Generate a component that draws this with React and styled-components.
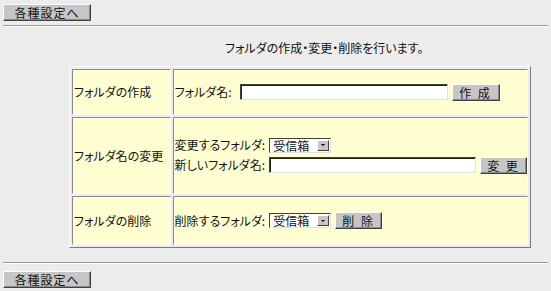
import React from "react";
import styled, { createGlobalStyle } from "styled-components";

const Global = createGlobalStyle`
  html, body { margin: 0; padding: 0; background: #ececec; }
  body {
    font-family: "Noto Sans CJK JP", "Noto Sans", sans-serif;
    font-size: 12px;
    color: #111;
  }
`;

const Page = styled.div`
  width: 551px;
  min-height: 291px;
  box-sizing: border-box;
  padding: 4px 3px 0 3px;
  background: #ececec;
  font-feature-settings: "palt";
`;

const NavButton = styled.button`
  display: block;
  width: 88px;
  height: 17px;
  padding: 0;
  margin: ${p => p.$top || 0}px 0 0 0;
  background: #c6c6c6;
  border: 1px solid;
  border-color: #ffffff #404040 #404040 #ffffff;
  box-shadow: inset -1px -1px 0 #8a8a8a;
  font: 12px/15px "Noto Sans CJK JP", sans-serif;
  font-feature-settings: "palt";
  color: #111;
  letter-spacing: 1px;
`;

const Rule = styled.div`
  margin-top: ${p => p.$top}px;
  height: 0;
  border-top: 1px solid #9a9a9a;
  border-bottom: 1px solid #ffffff;
`;

const Caption = styled.div`
  margin: 14px 0 0 222px;
  line-height: 14px;
  font-size: 12px;
`;

const FormTable = styled.table`
  margin: 11px 0 0 66px;
  width: 462px;
  border-collapse: separate;
  border-spacing: 2px;
  border: 1px solid;
  border-color: #ffffff #7a7a7a #7a7a7a #ffffff;
`;

const Cell = styled.td`
  background: #ffffd2;
  border: 1px solid;
  border-color: #8a8a8a #ffffff #ffffff #8a8a8a;
  padding: 0 0 0 1px;
  vertical-align: middle;
  height: ${p => p.$h}px;
  width: ${p => (p.$w ? p.$w + "px" : "auto")};
  font-size: 12px;
  line-height: 14px;
  white-space: nowrap;
`;

const Line = styled.div`
  display: flex;
  align-items: center;
  gap: ${p => p.$gap || 2}px;
  margin-top: ${p => p.$top || 0}px;
`;

const Label = styled.span`
  margin-right: ${p => p.$gap || 0}px;
`;

const TextBox = styled.div`
  width: ${p => p.$w}px;
  height: 16px;
  box-sizing: border-box;
  background: #fff;
  border: 1px solid;
  border-color: #404040 #e0e0e0 #e0e0e0 #404040;
  box-shadow: inset 1px 1px 0 #202020;
`;

const Select = styled.div`
  width: 62px;
  height: 15px;
  box-sizing: border-box;
  background: #fff;
  border: 1px solid;
  border-color: #404040 #e0e0e0 #e0e0e0 #404040;
  display: flex;
  align-items: center;
  justify-content: space-between;
  padding-left: 3px;
  font-size: 12px;
  line-height: 13px;
`;

const Arrow = styled.span`
  width: 12px;
  height: 11px;
  margin-right: 1px;
  box-sizing: border-box;
  background: #c6c6c6;
  border: 1px solid;
  border-color: #fff #404040 #404040 #fff;
  display: flex;
  align-items: center;
  justify-content: center;
  &::after {
    content: "";
    border-left: 2px solid transparent;
    border-right: 2px solid transparent;
    border-top: 2px solid #000;
  }
`;

const ActButton = styled.button`
  width: ${p => p.$w}px;
  height: 17px;
  padding: 0;
  background: #c6c6c6;
  border: 1px solid;
  border-color: #ffffff #404040 #404040 #ffffff;
  box-shadow: inset -1px -1px 0 #8a8a8a;
  font: 12px/15px "Noto Sans CJK JP", sans-serif;
  color: #111;
  letter-spacing: 2px;
  white-space: pre;
`;

export default function App() {
  return (
    <>
      <Global />
      <Page>
        <NavButton>各種設定へ</NavButton>
        <Rule $top={4} />
        <Caption>フォルダの作成・変更・削除を行います。</Caption>
        <FormTable>
          <tbody>
            <tr>
              <Cell $w={99} $h={44}>フォルダの作成</Cell>
              <Cell $h={44}>
                <Line $gap={4}>
                  <Label $gap={4}>フォルダ名:</Label>
                  <TextBox $w={208} />
                  <ActButton $w={48}>作 成</ActButton>
                </Line>
              </Cell>
            </tr>
            <tr>
              <Cell $w={99} $h={75}>フォルダ名の変更</Cell>
              <Cell $h={75}>
                <Line $gap={4}>
                  <Label>変更するフォルダ:</Label>
                  <Select>受信箱<Arrow /></Select>
                </Line>
                <Line $gap={4} $top={4}>
                  <Label>新しいフォルダ名:</Label>
                  <TextBox $w={207} />
                  <ActButton $w={47}>変 更</ActButton>
                </Line>
              </Cell>
            </tr>
            <tr>
              <Cell $w={99} $h={47}>フォルダの削除</Cell>
              <Cell $h={47}>
                <Line $gap={4}>
                  <Label>削除するフォルダ:</Label>
                  <Select>受信箱<Arrow /></Select>
                  <ActButton $w={47}>削 除</ActButton>
                </Line>
              </Cell>
            </tr>
          </tbody>
        </FormTable>
        <Rule $top={14} />
        <NavButton $top={7}>各種設定へ</NavButton>
      </Page>
    </>
  );
}
